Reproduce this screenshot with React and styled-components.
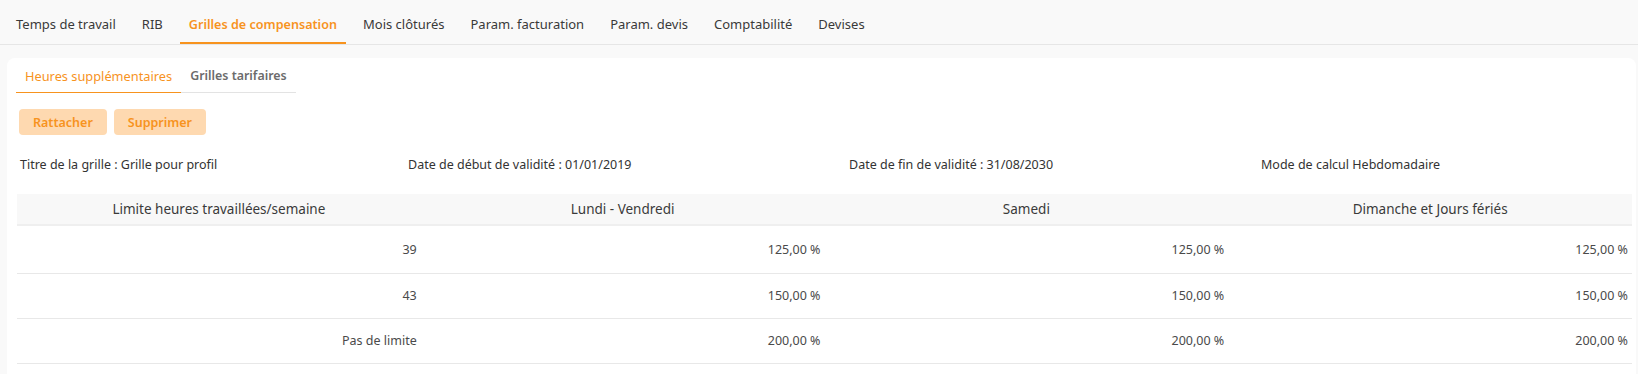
import styled, { createGlobalStyle } from 'styled-components';

const GlobalStyle = createGlobalStyle`
  html, body {
    margin: 0;
    padding: 0;
    background: #f9f9f9;
  }
  body {
    font-family: "Noto Sans", "Open Sans", sans-serif;
    color: #3a3a3a;
  }
  * {
    box-sizing: border-box;
  }
`;

const ORANGE = '#f7931e';

const mainTabs = [
  'Temps de travail',
  'RIB',
  'Grilles de compensation',
  'Mois clôturés',
  'Param. facturation',
  'Param. devis',
  'Comptabilité',
  'Devises',
];

const infos = [
  'Titre de la grille : Grille pour profil',
  'Date de début de validité : 01/01/2019',
  'Date de fin de validité : 31/08/2030',
  'Mode de calcul Hebdomadaire',
];

const columns = [
  'Limite heures travaillées/semaine',
  'Lundi - Vendredi',
  'Samedi',
  'Dimanche et Jours fériés',
];

const rows = [
  ['39', '125,00 %', '125,00 %', '125,00 %'],
  ['43', '150,00 %', '150,00 %', '150,00 %'],
  ['Pas de limite', '200,00 %', '200,00 %', '200,00 %'],
];

export default function App() {
  return (
    <Page>
      <GlobalStyle />
      <TopBar>
        {mainTabs.map((tab) => (
          <TopTab key={tab} active={tab === 'Grilles de compensation'}>
            {tab}
          </TopTab>
        ))}
      </TopBar>
      <Card>
        <SubTabs>
          <SubTab active>Heures supplémentaires</SubTab>
          <SubTab>Grilles tarifaires</SubTab>
        </SubTabs>
        <Actions>
          <ActionButton type="button">Rattacher</ActionButton>
          <ActionButton type="button">Supprimer</ActionButton>
        </Actions>
        <InfoRow>
          {infos.map((info) => (
            <Info key={info}>{info}</Info>
          ))}
        </InfoRow>
        <Table>
          <thead>
            <tr>
              {columns.map((col) => (
                <Th key={col}>{col}</Th>
              ))}
            </tr>
          </thead>
          <tbody>
            {rows.map((row, r) => (
              <tr key={row[0]}>
                {row.map((cell, i) => (
                  <Td key={i} first={r === 0}>{cell}</Td>
                ))}
              </tr>
            ))}
          </tbody>
        </Table>
      </Card>
    </Page>
  );
}

const Page = styled.div`
  width: 1638px;
  min-height: 374px;
  background: #f9f9f9;
`;

const TopBar = styled.nav`
  display: flex;
  gap: 8px;
  height: 45px;
  padding-left: 7px;
  border-bottom: 1px solid #e6e6e6;
`;

const TopTab = styled.div`
  display: flex;
  align-items: center;
  padding: 6px 9px 0;
  height: 44px;
  font-size: ${(p) => (p.active ? 12.6 : 13)}px;
  font-weight: ${(p) => (p.active ? 600 : 400)};
  color: ${(p) => (p.active ? ORANGE : '#3a3a3a')};
  border-bottom: 2px solid ${(p) => (p.active ? ORANGE : 'transparent')};
`;

const Card = styled.section`
  margin: 13px 2px 0 7px;
  background: #fff;
  border-radius: 8px 8px 0 0;
  padding: 0 4px 10px 10px;
  min-height: 316px;
`;

const SubTabs = styled.div`
  display: inline-flex;
  margin-left: -1px;
  border-bottom: 1px solid #e3e3e3;
`;

const SubTab = styled.div`
  padding: 9px 9px 8px;
  height: 35px;
  font-size: ${(p) => (p.active ? 12.8 : 12.4)}px;
  font-weight: ${(p) => (p.active ? 400 : 600)};
  color: ${(p) => (p.active ? ORANGE : '#6b6b6b')};
  border-bottom: 1px solid ${(p) => (p.active ? ORANGE : 'transparent')};
  margin-bottom: -1px;
`;

const Actions = styled.div`
  display: flex;
  gap: 7px;
  margin: 16px 0 0 2px;
`;

const ActionButton = styled.button`
  height: 26px;
  padding: 0 14px;
  border: none;
  border-radius: 4px;
  background: #fed9b0;
  color: ${ORANGE};
  font-family: inherit;
  font-size: 12.5px;
  font-weight: 600;
`;

const InfoRow = styled.div`
  display: grid;
  grid-template-columns: 388px 441px 412px 1fr;
  margin: 21px 0 0 3px;
  font-size: 12.5px;
  line-height: 18px;
`;

const Info = styled.div`
  color: #333;
`;

const Table = styled.table`
  width: 1615px;
  margin-top: 20px;
  table-layout: fixed;
  border-collapse: collapse;
  font-size: 12.5px;
`;

const Th = styled.th`
  height: 31px;
  padding: 0;
  background: #f8f8f8;
  font-size: 13.5px;
  font-weight: 400;
  color: #3a3a3a;
  text-align: center;
  border-bottom: 2px solid #efefef;
`;

const Td = styled.td`
  height: ${(p) => (p.first ? 48 : 45)}px;
  padding: 0 4px 0 0;
  text-align: right;
  color: #4a4a4a;
  border-bottom: 1px solid #e8e8e8;
`;
